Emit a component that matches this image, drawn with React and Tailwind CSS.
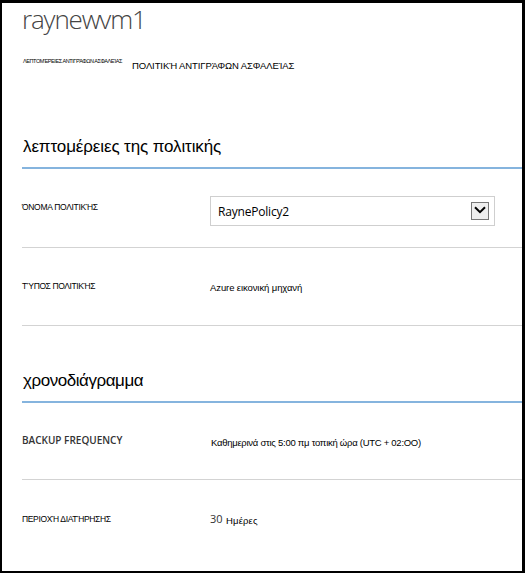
const sans = "font-['Liberation_Sans',Arial,sans-serif]";
const ui = "font-['Open_Sans','Noto_Sans',sans-serif]";

function Heading({ children, className }) {
  return (
    <h2 className={`flex items-start whitespace-nowrap border-b-2 border-[#85b4de] pl-px pt-px text-[17px] leading-5 text-black ${sans} ${className}`}>
      {children}
    </h2>
  );
}

function Row({ label, children, className }) {
  return (
    <div className={`flex items-start ${className}`}>
      <div className="w-[188px] shrink-0 whitespace-nowrap">{label}</div>
      {children}
    </div>
  );
}

export default function App() {
  return (
    <main className={`h-[573px] w-[525px] overflow-hidden border-b-2 border-l-2 border-r-3 border-t-3 border-black bg-white pl-5 text-black ${sans}`}>
      <h1 className={`h-[55px] whitespace-nowrap text-[26px] font-light leading-[33px] tracking-[-1.15px] text-[#444] ${ui}`}>
        raynewvm1
      </h1>
      <nav className="flex h-[78px] items-start whitespace-nowrap">
        <span className="w-[110px] pl-px text-[5.5px] leading-[7px] tracking-[-0.42px]">ΛΕΠΤΟΜΈΡΕΙΕΣ ΑΝΤΙΓΡΆΦΩΝ ΑΣΦΑΛΕΊΑΣ</span>
        <span className="text-[9.5px] leading-4 tracking-[-0.1px]">ΠΟΛΙΤΙΚΉ ΑΝΤΙΓΡΆΦΩΝ ΑΣΦΑΛΕΊΑΣ</span>
      </nav>

      <Heading className="h-[33px] tracking-[-0.12px]">λεπτομέρειες της πολιτικής</Heading>
      <Row className="h-[79px] border-b border-[#d3d3d3] pt-[27px]" label={<div className="pt-[6px] text-[8.5px] leading-[10px] tracking-[-0.3px]">ΌΝΟΜΑ ΠΟΛΙΤΙΚΉΣ</div>}>
        <div className={`flex h-[30px] w-[285px] items-center justify-between border border-[#cfcfcf] pl-[7px] pr-[5px] text-[12px] tracking-[-0.2px] ${ui}`}>
          <span className="pt-0.5">RaynePolicy2</span>
          <span className="flex h-[18px] w-[18px] items-start justify-center border border-[#777] bg-[#eee] pt-[3px]">
            <svg width="12" height="8" viewBox="0 0 12 8" fill="none" stroke="#000" strokeWidth="2">
              <path d="M1 1.2L6 6.2L11 1.2" />
            </svg>
          </span>
        </div>
      </Row>
      <Row className="h-[78px] border-b border-[#d3d3d3] pt-[33px]" label={<div className="text-[8.5px] leading-[10px] tracking-[-0.4px]">ΤΎΠΟΣ ΠΟΛΙΤΙΚΉΣ</div>}>
        <span className="whitespace-nowrap pt-px text-[9.5px] leading-[12px] tracking-[-0.1px]">Azure εικονική μηχανή</span>
      </Row>

      <Heading className="mt-[44px] h-[33px] tracking-[-0.45px]">χρονοδιάγραμμα</Heading>
      <Row className="h-[77px] border-b border-[#d3d3d3] pt-[30px]" label={<div className={`text-[10px] font-semibold leading-[14px] text-[#333] ${ui}`}>BACKUP FREQUENCY</div>}>
        <span className="whitespace-nowrap pl-px pt-[4px] text-[9.5px] leading-[12px] tracking-[-0.27px]">Καθημερινά στις 5:00 πμ τοπική ώρα (UTC + 02:ΟΟ)</span>
      </Row>
      <Row className="pt-[32px]" label={<div className="pt-[2px] text-[8.5px] leading-[10px] tracking-[-0.35px]">ΠΕΡΙΟΧΉ ΔΙΑΤΉΡΗΣΗΣ</div>}>
        <span className={`w-4 text-[11px] leading-[14px] text-[#333] ${ui}`}>30</span>
        <span className="pt-[3px] text-[9.5px] leading-[12px] tracking-[0.15px]">Ημέρες</span>
      </Row>
    </main>
  );
}
